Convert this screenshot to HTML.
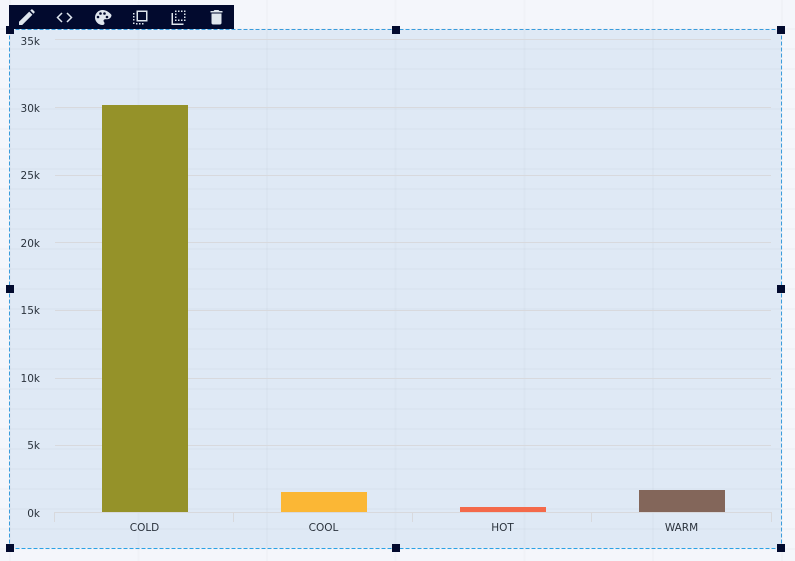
<!DOCTYPE html>
<html><head><meta charset="utf-8"><style>
html,body{margin:0;padding:0;width:795px;height:561px;overflow:hidden;background:#f4f6fb}
svg{display:block}
text{font-family:"DejaVu Sans","Liberation Sans",sans-serif;font-size:10.5px;fill:#2a323c}
</style></head><body>
<svg width="795" height="561" viewBox="0 0 795 561" xmlns="http://www.w3.org/2000/svg">
<rect x="10" y="30" width="771" height="518" fill="#dfe9f5"/>
<g stroke="#000" stroke-opacity=".014" stroke-width="2" fill="none">
<path d="M0 29H795M0 49H795M0 69H795M0 89H795M0 109H795M0 129H795M0 149H795M0 169H795M0 189H795M0 209H795M0 229H795M0 249H795M0 269H795M0 289H795M0 309H795M0 329H795M0 349H795M0 369H795M0 389H795M0 409H795M0 429H795M0 449H795M0 469H795M0 489H795M0 509H795M0 529H795M0 549H795"/>
<path d="M10 0V561M138.500 0V561M267 0V561M395.500 0V561M524.500 0V561M653 0V561M782 0V561"/>
</g>
<g stroke="#d8d9dd" stroke-width="1" fill="none">
<path d="M55 39.500H771M55 107.500H771M55 175.500H771M55 242.500H771M55 310.500H771M55 378.500H771M55 445.500H771"/>
<path d="M54.500 522V512.500H771.500V522M233.500 512V522M412.500 512V522M591.500 512V522"/>
</g>
<rect x="102" y="105" width="86" height="407" fill="#959229"/>
<rect x="281" y="492" width="86" height="20" fill="#fbb735"/>
<rect x="460" y="507" width="86" height="5" fill="#f4694a"/>
<rect x="639" y="490" width="86" height="22" fill="#83665a"/>
<g text-anchor="end">
<text x="40" y="45">35k</text><text x="40" y="112">30k</text><text x="40" y="179">25k</text><text x="40" y="247">20k</text><text x="40" y="314">15k</text><text x="40" y="382">10k</text><text x="40" y="449">5k</text><text x="40" y="517">0k</text>
</g>
<g text-anchor="middle">
<text x="144.500" y="531">COLD</text><text x="323.500" y="531">COOL</text><text x="502.500" y="531">HOT</text><text x="681.500" y="531">WARM</text>
</g>
<g fill="none" stroke-width="1" stroke-dasharray="4 2">
<path d="M9.500 29.500H781.500M9.500 29.500V548.500M781.500 29.500V548.500" stroke="#3a9cdc"/>
<path d="M9.500 548.500H781.500" stroke="#2ba2e6"/>
</g>
<rect x="9" y="5" width="225" height="24" fill="#020a2e"/>
<g fill="#dfe6ee">
<path d="M19 25v-3.200L29.200 11.600l3.200 3.200L22.200 25zM30.300 10.500l.9-.9c.4-.4 1-.4 1.400 0l1.800 1.800c.4.400.4 1 0 1.400l-.9.900z"/>
<path d="M62 13l-4.500 4.500 4.500 4.500M67 13l4.500 4.500-4.500 4.500" fill="none" stroke="#dfe6ee" stroke-width="1.500"/>
<path fill-rule="evenodd" d="M102.500 10c-4.100 0-7.500 3.400-7.500 7.500s3.400 7.500 7.500 7.500c1.300 0 2-.8 2-1.800 0-.5-.2-.9-.5-1.200-.3-.3-.5-.7-.5-1.200 0-.9.700-1.600 1.700-1.600h2c2.300 0 4.300-1.900 4.300-4.200C110 12.900 106.600 10 102.500 10zM98 18.300a1.300 1.300 0 1 1 0-2.600 1.300 1.300 0 0 1 0 2.600zM100.500 14.800a1.300 1.300 0 1 1 0-2.600 1.300 1.300 0 0 1 0 2.600zM104.500 14.800a1.300 1.300 0 1 1 0-2.600 1.300 1.300 0 0 1 0 2.600zM107 18.300a1.300 1.300 0 1 1 0-2.600 1.300 1.300 0 0 1 0 2.600z"/>
<path fill-rule="evenodd" d="M136.500 10.500h11v11h-11zM138 12v8h8v-8z"/>
<path d="M133 13h1.500v1.500H133zM133 16h1.500v1.500H133zM133 19h1.500v1.500H133zM133 22.500h1.500V24H133zM136 23h1.500v1.500H136zM139 23h1.500v1.500H139zM142 23h1.500v1.500H142z"/>
<path d="M171.500 13h1.500v10.500h10.500V25h-12z"/>
<path d="M175 10.500h1.500V12H175zM178 10.500h1.500V12H178zM181 10.500h1.500V12H181zM184 10.500h1.500V12H184zM184 13.500h1.500V15H184zM184 16.500h1.500V18H184zM184 19.500h1.500V21H184zM181 19.500h1.500V21H181zM178 19.500h1.500V21H178zM175 19.500h1.500V21H175zM175 16.500h1.500V18H175zM175 13.500h1.500V15H175z"/>
<path d="M211.500 13.500h10V23c0 .8-.7 1.500-1.500 1.500h-7c-.8 0-1.500-.7-1.500-1.500zM210.500 11h3l1-1h4l1 1h3v1.500h-12z"/>
</g>
<g fill="#020a2e">
<rect x="6" y="26" width="8" height="8"/><rect x="392" y="26" width="8" height="8"/><rect x="777" y="26" width="8" height="8"/>
<rect x="6" y="285" width="8" height="8"/><rect x="777" y="285" width="8" height="8"/>
<rect x="6" y="544" width="8" height="8"/><rect x="392" y="544" width="8" height="8"/><rect x="777" y="544" width="8" height="8"/>
</g>
</svg>
</body></html>
